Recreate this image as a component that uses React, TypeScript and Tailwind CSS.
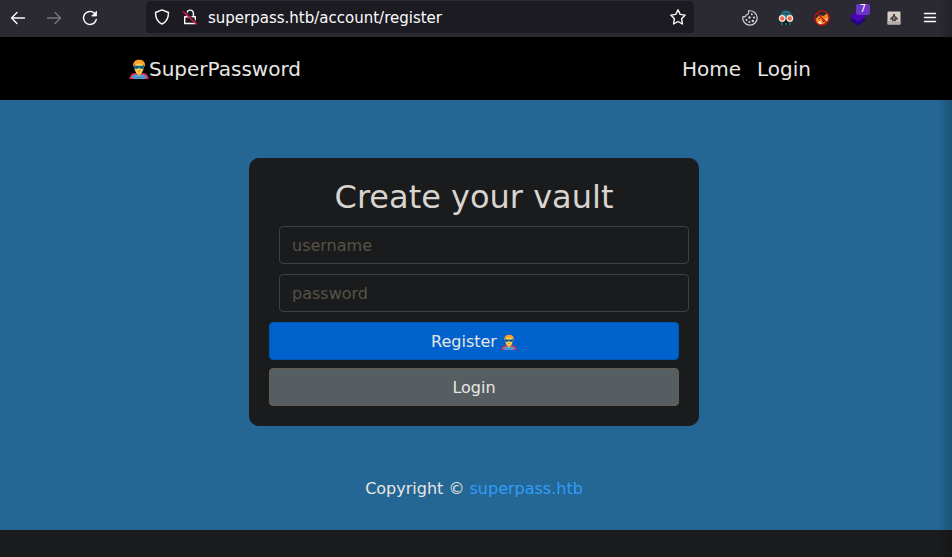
import type { ReactNode } from "react";

function Hero({ className }: { className: string }) {
  return (
    <svg viewBox="0 0 20 20" className={className} aria-hidden="true">
      <path d="M0 20c1-4 3-6 5-6h10c2 0 4 2 5 6z" fill="#d9264c" />
      <path d="M2 18.500c1-2 3-3 5-3h6c2 0 4 1 5 3l-4 1.500H6z" fill="#58a6dc" />
      <path d="M7 11h6v3l-3 3-3-3z" fill="#f2b531" />
      <ellipse cx="10" cy="8.500" rx="4.600" ry="6" fill="#ffd255" />
      <path d="M4.300 8C3.500 3.500 6 .8 10 .8c4.500 0 6.800 2.700 5.700 7.200L14.500 6c-1-1-2.500-1.500-4.500-1.500S6.500 5 5.500 6z" fill="#ffa028" />
      <path d="M5 6.800h10V9c-1 1.300-3.500 1.300-5 0-1.500 1.300-4 1.300-5 0z" fill="#176d9e" />
      <path d="M6.500 8h2M11.500 8h2" stroke="#0b3550" />
      <path d="M8.500 12h3" stroke="#b96a18" strokeWidth=".8" />
      <path d="M4 17.500l6 1.500 6-1.500" fill="none" stroke="#2e72b8" strokeWidth=".8" />
    </svg>
  );
}

function Line({ children, className = "size-4" }: { children: ReactNode; className?: string }) {
  return (
    <svg
      viewBox="0 0 16 16"
      className={className}
      fill="none"
      stroke="currentColor"
      strokeWidth="1.400"
      strokeLinecap="round"
      strokeLinejoin="round"
      aria-hidden="true"
    >
      {children}
    </svg>
  );
}

function BrowserBar() {
  return (
    <div className="flex items-start border-b border-black bg-[#2b2a33] pr-3.5 pl-2.5 text-[#fbfbfe]">
      <div className="flex h-[37px] flex-1 items-center">
        <div className="flex w-[136px] shrink-0 items-center gap-5 pb-0.5">
          <button aria-label="Back">
            <Line><path d="M14.500 8H1.500M7 2.500 1.500 8 7 13.500" /></Line>
          </button>
          <button aria-label="Forward" className="text-[#78777e]">
            <Line><path d="M1.500 8h13M9 2.500 14.500 8 9 13.500" /></Line>
          </button>
          <button aria-label="Reload">
            <Line>
              <path d="M14.300 9.500A6.500 6.500 0 1 1 12.500 3.200" />
              <path d="M14.500 1.500v4.500H10z" fill="currentColor" strokeWidth=".8" />
            </Line>
          </button>
        </div>
        <div className="mt-px flex h-8 max-w-[548px] flex-1 items-center self-start rounded bg-[#1c1b22] px-2">
          <Line className="size-4 shrink-0">
            <path d="M8 .9 14.500 3.500C14.500 9 12.500 13 8 15 3.500 13 1.500 9 1.500 3.500z" />
          </Line>
          <svg viewBox="0 0 16 16" className="ml-3 size-4 shrink-0" fill="none" aria-hidden="true">
            <path d="M5 7V4.300a3.200 3.200 0 0 1 6.400 0V7M2.700 7.800h10.600v6.700H2.700z" stroke="#fbfbfe" strokeWidth="1.400" strokeLinejoin="round" />
            <path d="m2.500 2 13 12" stroke="#1c1b22" strokeWidth="1.200" />
            <path d="m1 2.500 14 13" stroke="#e3103f" strokeWidth="1.500" />
          </svg>
          <input
            aria-label="Address"
            defaultValue="superpass.htb/account/register"
            className="ml-2.5 min-w-0 flex-1 bg-transparent pt-px text-[15px] leading-5 outline-none"
          />
          <Line className="size-4 shrink-0">
            <path d="m8 .8 2.200 4.600 5 .7-3.600 3.600.8 5.300L8 12.500 3.600 15l.8-5.300L.8 6.100l5-.7z" />
          </Line>
        </div>
        <div className="ml-auto flex items-center gap-5 pb-0.5">
          <button aria-label="Cookies" className="text-[#d2d1d6]">
            <Line>
              <path d="M6.500.9A7.200 7.200 0 1 1 .9 6.500C2.500 7.300 4 6.500 4 5 6 5 7 3 6.500.9z" strokeWidth="1.200" />
              <g fill="currentColor" stroke="none">
                <circle cx="9.800" cy="4.200" r="1" />
                <circle cx="7.500" cy="7.500" r="1.200" />
                <circle cx="12" cy="7.500" r="1.100" />
                <circle cx="4.500" cy="10" r="1" />
                <circle cx="10.800" cy="11" r="1.200" />
                <circle cx="7.300" cy="12" r="1" />
              </g>
            </Line>
          </button>
          <button aria-label="Privacy goggles">
            <svg viewBox="0 0 16 16" className="size-4" aria-hidden="true">
              <path d="M2 8C2 3 4 .5 8 .5S14 3 14 8v2H2z" fill="#286f80" />
              <path d="M5 2.500 8 4l3-1" fill="none" stroke="#174b59" />
              <path d="M3 9h10v6H3z" fill="#101820" />
              <path d="M3 12.500h2V15H3zM7 13h2v2H7zM11 12.500h2V15h-2z" fill="#1c6878" />
              <circle cx="4.200" cy="8.500" r="2.800" fill="#f06448" stroke="#f3e6df" strokeWidth="1.300" />
              <circle cx="11.800" cy="8.500" r="2.800" fill="#f06448" stroke="#f3e6df" strokeWidth="1.300" />
            </svg>
          </button>
          <button aria-label="Fox blocker">
            <svg viewBox="0 0 16 16" className="size-4" aria-hidden="true">
              <path d="m1.500 9 4-4 4 1 4-3 1.500 5-2 4-5 3-5-1z" fill="#ee831e" />
              <path d="m3.500 12 3-1.500 1.500 3-2.500 1zM10.500 9l3-1-.5 3.500z" fill="#f4d9a8" />
              <path d="m8.500 10 1.500 2M5 8l1 1" stroke="#432414" />
              <circle cx="8" cy="8" r="7.200" fill="none" stroke="#c90e12" strokeWidth="1.200" />
              <path d="m3 3 10 10" stroke="#c90e12" strokeWidth="1.200" />
            </svg>
          </button>
          <button aria-label="Layers, 7" className="relative">
            <svg viewBox="0 0 16 16" className="size-4" aria-hidden="true">
              <path d="m0 10 8-5 8 5-8 6z" fill="#24057d" />
              <path d="m0 6 8-5 8 5-8 6z" fill="#4b05b5" />
            </svg>
            <span className="absolute -top-1.5 left-1.5 flex h-[11px] w-3.5 items-center justify-center rounded-xs bg-[#6c35c5] text-[10px] leading-none">7</span>
          </button>
          <button aria-label="Portrait">
            <svg viewBox="0 0 16 16" className="size-4" aria-hidden="true">
              <rect x="1.500" y="1.500" width="13" height="13" rx="1" fill="#d5cdc6" />
              <path d="M1.500 11h13v3.500h-13z" fill="#b5ada7" />
              <path d="M4 10c0-2 1-3 3-4V4h2v2c2 1 3 2 3 4l-2-.5V11H6V9.500z" fill="#4a4746" />
              <path d="M7.300 7h1.400v3H7.300z" fill="#8b8582" />
            </svg>
          </button>
          <button aria-label="Menu">
            <Line><path d="M2.500 3.500h11M2.500 7.500h11M2.500 11.500h11" /></Line>
          </button>
        </div>
      </div>
    </div>
  );
}

const field =
  "-mr-2.5 ml-2.5 h-[38px] rounded border border-[#3c4144] bg-[#1a1b1c] px-3 text-[#e8e6e3] placeholder:text-[#585248] outline-none";

export default function App() {
  return (
    <div className="relative min-h-screen bg-[#1a1b1c] text-base text-[#e8e6e3] [font-family:'DejaVu_Sans',sans-serif]">
      <BrowserBar />
      <header className="bg-black pr-1">
        <nav className="mx-auto flex max-w-[720px] items-center justify-between px-[15px] py-4 text-xl leading-[30px]">
          <a href="#home" className="flex items-center">
            <Hero className="size-5" />
            SuperPassword
          </a>
          <div className="flex gap-4 pr-2">
            <a href="#home">Home</a>
            <a href="#login">Login</a>
          </div>
        </nav>
      </header>
      <main className="flex flex-col items-center bg-[#246794] pt-[58px] pr-1 pb-[29px]">
        <form className="flex w-full max-w-[450px] flex-col rounded-[10px] bg-[#1a1b1c] p-5">
          <h1 className="mb-2.5 text-center text-[32px] leading-[38px] text-[#d8d4cf]">Create your vault</h1>
          <input aria-label="username" placeholder="username" className={field} />
          <input aria-label="password" type="password" placeholder="password" className={field + " mt-2.5"} />
          <button type="button" className="mt-2.5 flex h-[38px] items-center justify-center gap-1 rounded border border-[#0056b3] bg-[#0062cc] pt-0.5">
            Register <Hero className="size-4" />
          </button>
          <button type="button" className="mt-2 h-[38px] rounded border border-[#665e52] bg-[#575e62] pt-0.5">
            Login
          </button>
        </form>
        <footer className="mt-[51px] leading-6">
          Copyright © <a href="#superpass" className="text-[#339bf8]">superpass.htb</a>
        </footer>
      </main>
      <div className="pointer-events-none absolute inset-y-0 right-0 w-3.5 bg-linear-to-r from-transparent to-black/20" />
    </div>
  );
}
